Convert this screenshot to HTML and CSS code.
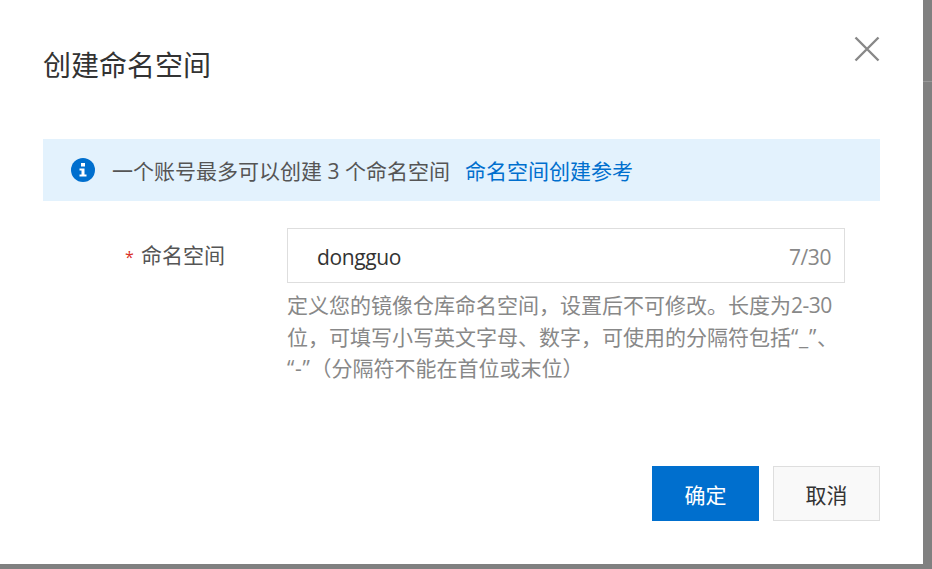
FILE: index.html
```html
<!DOCTYPE html>
<html lang="zh-CN">
<head>
  <meta charset="UTF-8" />
  <title>创建命名空间</title>
  <link rel="stylesheet" href="styles.css">
</head>
<body>
<div class="page">
  <div class="dialog">
    <div class="dialog-header">
      <h2>创建命名空间</h2>
      <button class="close-btn" aria-label="关闭">
        <svg width="26" height="26" viewBox="0 0 26 26"><path d="M1.5 1.5 L24.5 24.5 M24.5 1.5 L1.5 24.5" /></svg>
      </button>
    </div>

    <div class="alert">
      <svg class="alert-icon" width="24" height="24" viewBox="0 0 24 24">
        <circle cx="12" cy="12" r="12" fill="#006fce" />
        <rect x="10" y="5" width="4" height="3.5" fill="#fff" />
        <path d="M8.5 10.5 H13.5 V16.5 H15.5 V18.5 H8.5 V16.5 H10.5 V12.5 H8.5 Z" fill="#fff" />
      </svg>
      <span>一个账号最多可以创建 3 个命名空间</span>
      <a href="#" class="alert-link">命名空间创建参考</a>
    </div>

    <div class="form-row">
      <label class="form-label"><span class="required">*</span>命名空间</label>
      <div class="form-control">
        <div class="input-box">
          <span class="input-value">dongguo</span>
          <span class="input-count">7/30</span>
        </div>
        <p class="help">定义您的镜像仓库命名空间，设置后不可修改。长度为<span class="num">2-30</span>位，可填写小写英文字母、数字，可使用的分隔符包括<span class="sep">“_”</span>、<span class="sep">“-”</span>（分隔符不能在首位或末位）</p>
      </div>
    </div>

    <div class="dialog-footer">
      <button class="btn btn-primary">确定</button>
      <button class="btn">取消</button>
    </div>
  </div>
  <div class="backdrop"><div class="backdrop-line"></div></div>
</div>
</body>
</html>
```

FILE: styles.css
```css
html, body {
  margin: 0;
  height: 100%;
  overflow: hidden;
}
body {
  font-family: "Open Sans", "Noto Sans CJK SC", sans-serif;
  background-color: #808080;
  color: #333;
  text-spacing-trim: space-all;
}
.page {
  display: flex;
  height: 564px;
}
.dialog {
  width: 923px;
  box-sizing: border-box;
  padding: 0 43px;
  background-color: #fff;
  display: flex;
  flex-direction: column;
}
.backdrop {
  flex: 1;
}
.backdrop-line {
  margin-top: 81px;
  height: 1px;
  background-color: #989898;
}
.dialog-header {
  display: flex;
  justify-content: space-between;
  height: 139px;
}
.dialog-header h2 {
  margin: 44px 0 0;
  font-size: 28px;
  line-height: 42px;
  font-weight: 400;
  color: #333;
}
.close-btn {
  margin: 36px 0 0 0;
  padding: 0;
  width: 26px;
  height: 26px;
  background: transparent;
  border: none;
  cursor: pointer;
}
.close-btn svg {
  display: block;
  fill: none;
  stroke: #888;
  stroke-width: 2.4;
}
.alert {
  height: 62px;
  padding-left: 28px;
  display: flex;
  align-items: center;
  background-color: #e3f2fd;
  font-size: 21px;
  color: #555;
}
.alert-icon {
  margin-right: 17px;
  flex-shrink: 0;
}
.alert-link {
  margin-left: 15px;
  color: #006fce;
  text-decoration: none;
}
.form-row {
  display: flex;
  margin-top: 27px;
}
.form-label {
  width: 244px;
  box-sizing: border-box;
  padding-left: 82px;
  font-size: 21px;
  line-height: 55px;
  color: #555;
}
.required {
  display: inline-block;
  width: 16px;
  font-size: 16px;
  color: #d93026;
}
.form-control {
  width: 558px;
}
.input-box {
  height: 55px;
  box-sizing: border-box;
  padding: 2px 13px 0 29px;
  display: flex;
  align-items: center;
  justify-content: space-between;
  border: 1px solid #dedede;
  font-size: 21px;
  letter-spacing: -0.4px;
}
.input-count {
  color: #888;
}
.help {
  margin: 7px 0 0;
  font-size: 21px;
  line-height: 31.5px;
  color: #888;
}
.help .num {
  letter-spacing: -0.5px;
}
.help .sep {
  letter-spacing: 0.7px;
}
.dialog-footer {
  margin-top: auto;
  padding-bottom: 43px;
  display: flex;
  justify-content: flex-end;
  gap: 14px;
}
.btn {
  width: 107px;
  height: 55px;
  padding: 0;
  font-family: inherit;
  font-size: 21px;
  color: #333;
  background-color: #f9f9f9;
  border: 1px solid #dedede;
  cursor: pointer;
}
.btn-primary {
  color: #fff;
  background-color: #006fce;
  border-color: #006fce;
}
```
